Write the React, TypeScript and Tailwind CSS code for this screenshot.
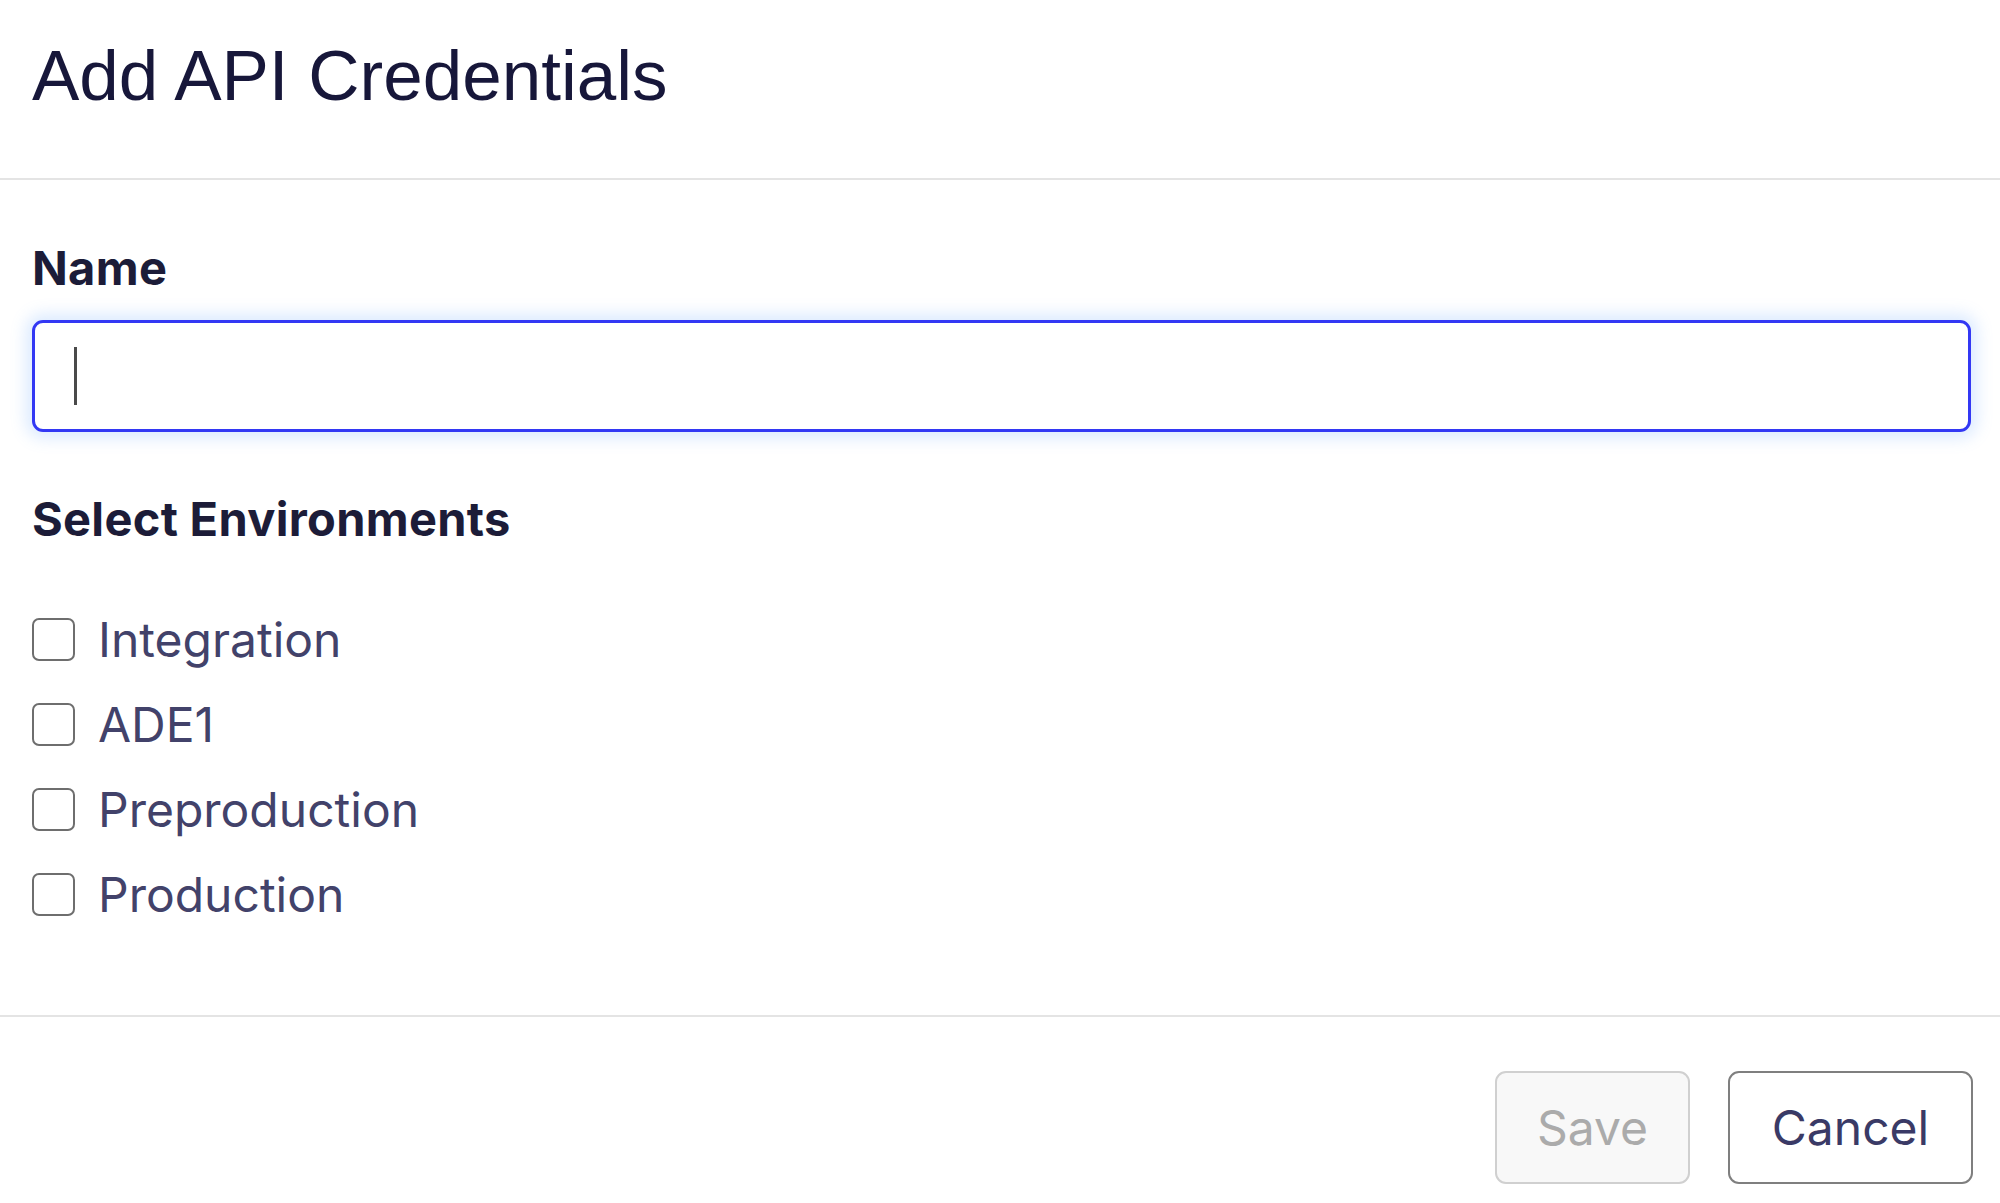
import React from 'react';

const environments = ['Integration', 'ADE1', 'Preproduction', 'Production'];

const Checkbox: React.FC<{ label: string }> = ({ label }) => (
  <label className="flex h-[85px] items-center gap-[23px]">
    <span className="h-[43px] w-[43px] shrink-0 rounded-[7px] border-[2.5px] border-[#6e6e6e] bg-white" />
    <span className="text-[48px] leading-none text-[#42426a]">{label}</span>
  </label>
);

export default function App() {
  return (
    <div className="min-h-screen bg-white font-['Inter',sans-serif]">
      {/* Header */}
      <div className="h-[180px] border-b-2 border-[#e4e4e4] pl-[32px] pt-[40px]">
        <h1 className="font-['Liberation_Sans',Arial,sans-serif] text-[71px] leading-none text-[#17173a]">
          Add API Credentials
        </h1>
      </div>

      {/* Body */}
      <div className="pl-[32px] pr-[29px] pt-[64px] pb-[78px]">
        <div className="text-[47px] font-bold leading-none tracking-[0.3px] text-[#1c1c38]">Name</div>
        <div className="mt-[29px] flex h-[112px] items-center rounded-[11px] border-[3px] border-[#3338f4] bg-white pl-[39px] shadow-[0_0_16px_6px_rgba(90,160,255,0.22)]">
          <span className="h-[58px] w-[3px] bg-[#4a4a4a]" />
        </div>

        <div className="mt-[63px] text-[47px] font-bold leading-none tracking-[0.3px] text-[#1c1c38]">
          Select Environments
        </div>

        <div className="mt-[55px] flex flex-col">
          {environments.map((env) => (
            <Checkbox key={env} label={env} />
          ))}
        </div>
      </div>

      {/* Footer */}
      <div className="flex justify-end gap-[38px] border-t-2 border-[#e4e4e4] pr-[27px] pt-[54px]">
        <button
          disabled
          className="flex h-[113px] w-[195px] items-center justify-center rounded-[11px] border-2 border-[#d0d0d0] bg-[#f8f8f8] text-[48px] leading-none text-[#ababab]"
        >
          Save
        </button>
        <button className="flex h-[113px] w-[245px] items-center justify-center rounded-[11px] border-[2.5px] border-[#7f7f7f] bg-white text-[48px] leading-none text-[#3a3a66]">
          Cancel
        </button>
      </div>
    </div>
  );
}
